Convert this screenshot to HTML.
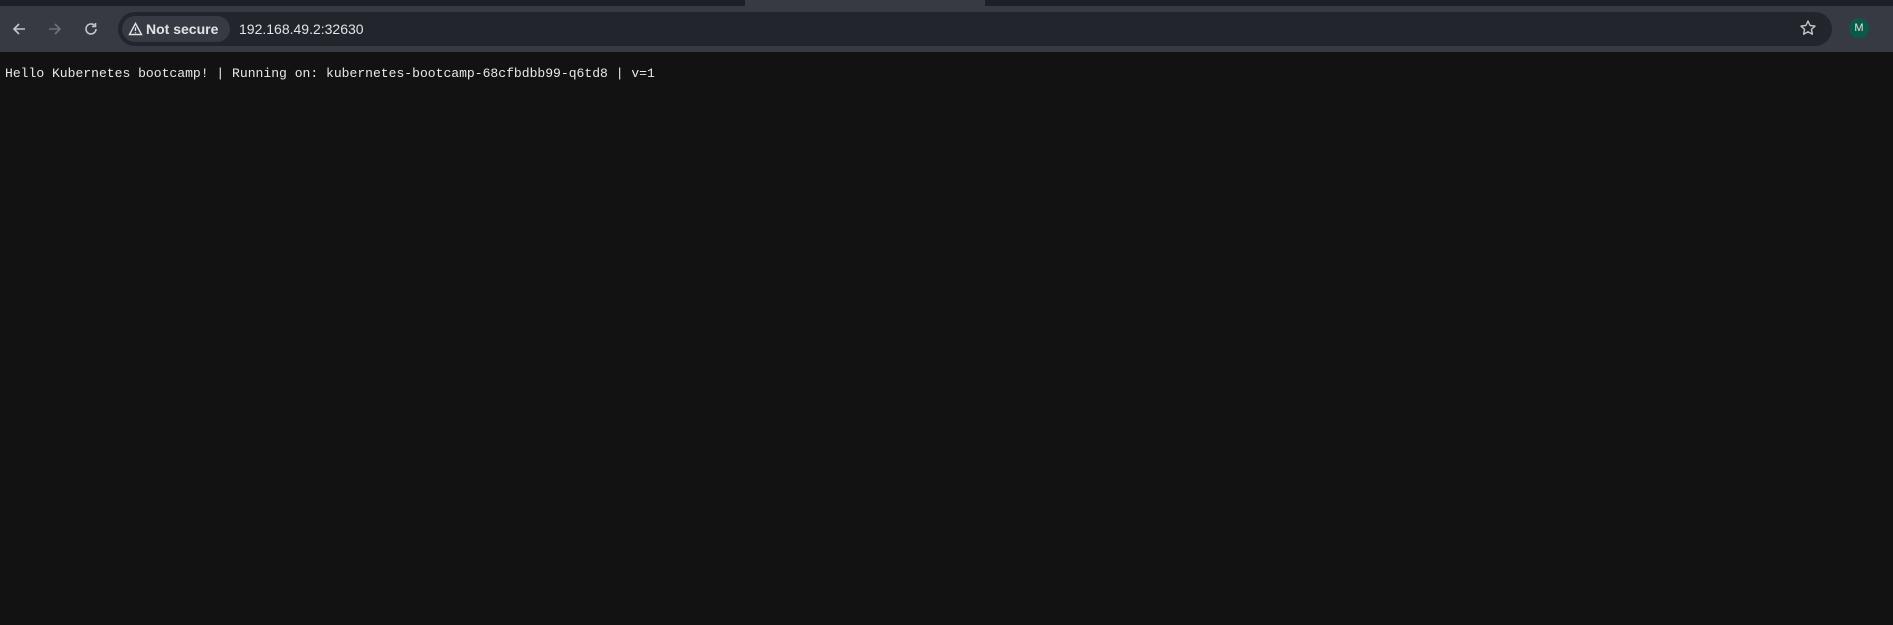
<!DOCTYPE html>
<html><head><meta charset="utf-8"><style>
html,body{margin:0;padding:0;width:1893px;height:625px;overflow:hidden;background:#121212;font-family:"Liberation Sans",sans-serif}
.top{position:absolute;left:0;top:0;width:1893px;height:6px;background:#1d2027}
.tab{position:absolute;left:745px;top:0;width:240px;height:6px;background:#373a43}
.bar{position:absolute;left:0;top:6px;width:1893px;height:46px;background:#373a43}
.omni{position:absolute;left:118px;top:12px;width:1714px;height:34px;border-radius:17px;background:#22252c}
.chip{position:absolute;left:122px;top:16px;width:108px;height:26px;border-radius:13px;background:#373a43;color:#e3e3e3;font-size:14px;font-weight:bold;line-height:26px}
.url{position:absolute;left:239px;top:12px;line-height:34px;color:#e3e3e3;font-size:14px}
.txt{position:absolute;left:5px;top:66px;font-family:"Liberation Mono",monospace;font-size:13.06px;color:#e8e8e8;white-space:pre}
.av{position:absolute;left:1849px;top:18px;width:20px;height:20px;border-radius:50%;background:#0b5a48;color:#e3e3e3;font-size:11px;text-align:center;line-height:20px}
</style></head><body>
<div class="top"></div><div class="tab"></div>
<div class="bar"></div>
<svg style="position:absolute;left:10px;top:20px" width="18" height="18" viewBox="0 0 18 18"><path d="M15 9H4M9 4L4 9l5 5" stroke="#c4c7c5" stroke-width="1.6" fill="none"/></svg>
<svg style="position:absolute;left:46px;top:20px" width="18" height="18" viewBox="0 0 18 18"><path d="M3 9h11M9 4l5 5-5 5" stroke="#6f7278" stroke-width="1.6" fill="none"/></svg>
<svg style="position:absolute;left:82px;top:20px" width="18" height="18" viewBox="0 0 18 18"><path d="M14 9a5 5 0 1 1-1.5-3.6" stroke="#c4c7c5" stroke-width="1.6" fill="none"/><path d="M13.5 3v3.5H10" stroke="#c4c7c5" stroke-width="1.6" fill="none"/></svg>
<div class="omni"></div>
<div class="chip"><svg style="position:absolute;left:6px;top:6px" width="15" height="14" viewBox="0 0 15 14"><path d="M7.5 1.5L13.5 12.5H1.5Z" stroke="#e3e3e3" stroke-width="1.4" fill="none"/><path d="M7.5 5.5v3.5M7.5 10.2v1" stroke="#e3e3e3" stroke-width="1.3"/></svg><span style="position:absolute;left:24px">Not secure</span></div>
<div class="url">192.168.49.2:32630</div>
<svg style="position:absolute;left:1799px;top:19px" width="18" height="18" viewBox="0 0 18 18"><path d="M9 2l2.1 4.5 4.9.6-3.6 3.3 1 4.8L9 12.8 4.6 15.2l1-4.8L2 7.1l4.9-.6Z" stroke="#c4c7c5" stroke-width="1.4" fill="none" stroke-linejoin="round"/></svg>
<div class="av">M</div>
<div class="txt">Hello Kubernetes bootcamp! | Running on: kubernetes-bootcamp-68cfbdbb99-q6td8 | v=1</div>
</body></html>
